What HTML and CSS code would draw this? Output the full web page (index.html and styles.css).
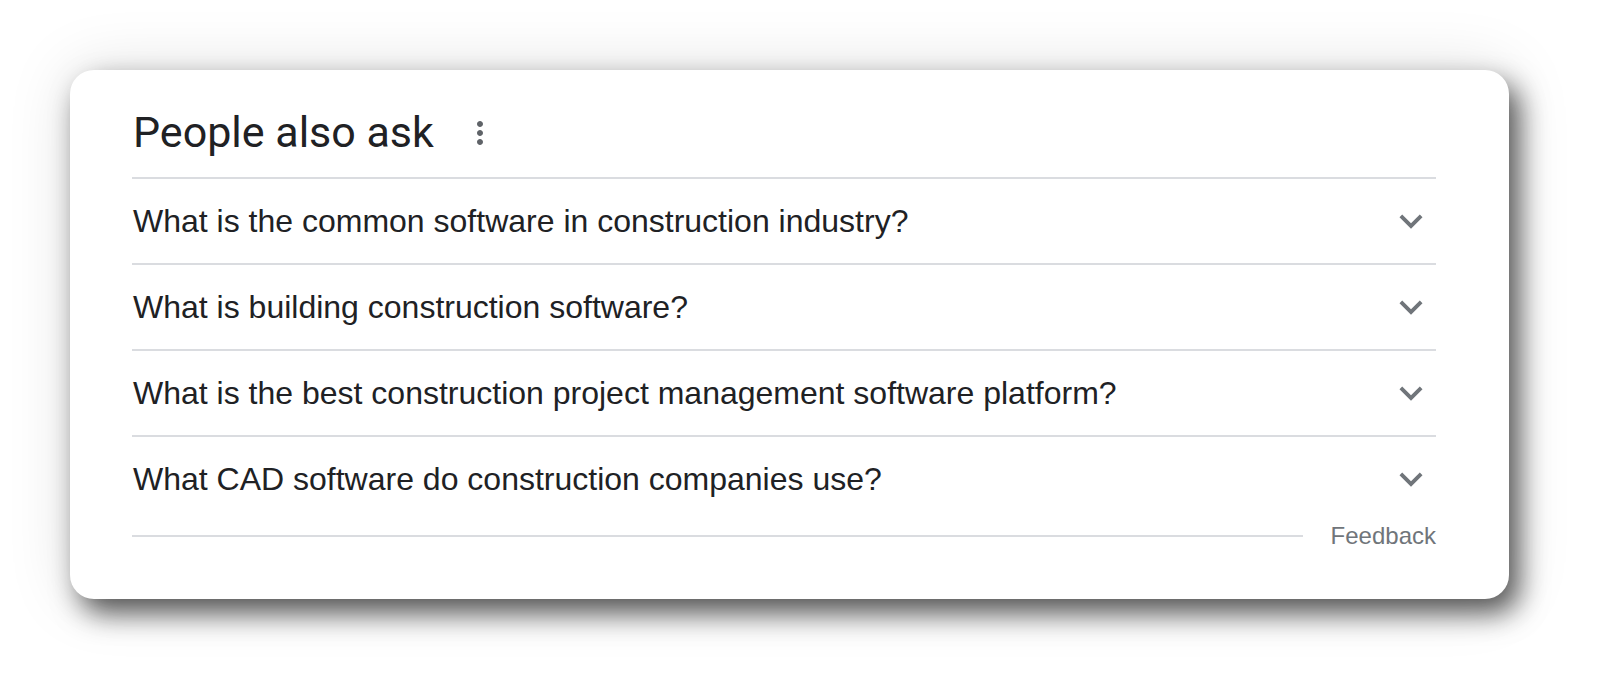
FILE: index.html
```html
<!DOCTYPE html>
<html lang="en">
<head>
<meta charset="utf-8">
<title>People also ask</title>
<link rel="stylesheet" href="styles.css">
</head>
<body>
<div class="card">
  <div class="head">
    <h2 class="title">People also ask</h2>
    <svg class="kebab" viewBox="0 0 24 24" aria-hidden="true"><path d="M12 8c1.1 0 2-.9 2-2s-.9-2-2-2-2 .9-2 2 .9 2 2 2zm0 2c-1.1 0-2 .9-2 2s.9 2 2 2 2-.9 2-2-.9-2-2-2zm0 6c-1.1 0-2 .9-2 2s.9 2 2 2 2-.9 2-2-.9-2-2-2z"/></svg>
  </div>
  <div class="list">
    <div class="row">
      <span class="q">What is the common software in construction industry?</span>
      <svg class="chev" viewBox="0 0 24 24" aria-hidden="true"><path d="M16.59 8.59L12 13.17 7.41 8.59 6 10l6 6 6-6z"/></svg>
    </div>
    <div class="row">
      <span class="q">What is building construction software?</span>
      <svg class="chev" viewBox="0 0 24 24" aria-hidden="true"><path d="M16.59 8.59L12 13.17 7.41 8.59 6 10l6 6 6-6z"/></svg>
    </div>
    <div class="row">
      <span class="q">What is the best construction project management software platform?</span>
      <svg class="chev" viewBox="0 0 24 24" aria-hidden="true"><path d="M16.59 8.59L12 13.17 7.41 8.59 6 10l6 6 6-6z"/></svg>
    </div>
    <div class="row">
      <span class="q">What CAD software do construction companies use?</span>
      <svg class="chev" viewBox="0 0 24 24" aria-hidden="true"><path d="M16.59 8.59L12 13.17 7.41 8.59 6 10l6 6 6-6z"/></svg>
    </div>
  </div>
  <div class="foot">
    <div class="line"></div>
    <span class="fb">Feedback</span>
  </div>
</div>
</body>
</html>
```
FILE: styles.css
```css
html, body {
  margin: 0;
  padding: 0;
  background: #ffffff;
}

body {
  width: 1598px;
  height: 688px;
  overflow: hidden;
  font-family: "Liberation Sans", Arial, sans-serif;
}

.card {
  box-sizing: border-box;
  margin: 70px 0 0 70px;
  width: 1439px;
  height: 529px;
  padding: 0 73px 0 62px;
  background: #ffffff;
  border-radius: 24px;
  box-shadow: 10px 14px 28px rgba(0, 0, 0, 0.65), 0 0 64px rgba(0, 0, 0, 0.13);
}

.head {
  box-sizing: border-box;
  height: 107px;
  padding-top: 37px;
  display: flex;
  align-items: flex-start;
}

.title {
  margin: 0 0 0 1px;
  font-family: Roboto, "Open Sans", sans-serif;
  font-weight: 400;
  font-size: 43px;
  line-height: 50px;
  color: #202124;
}

.kebab {
  width: 36px;
  height: 36px;
  margin: 8px 0 0 28px;
  fill: #5f6368;
}

.row {
  box-sizing: border-box;
  height: 86px;
  border-top: 2px solid #dadce0;
  display: flex;
  align-items: center;
  justify-content: space-between;
}

.q {
  padding-left: 1px;
  font-size: 32px;
  line-height: 37px;
  color: #202124;
}

.chev {
  width: 46px;
  height: 46px;
  margin-right: 2px;
  fill: #70757a;
}

.foot {
  height: 30px;
  display: flex;
  align-items: center;
}

.line {
  flex: 1;
  height: 2px;
  background: #dadce0;
}

.fb {
  margin-left: 28px;
  font-size: 24px;
  line-height: 26px;
  color: #70757a;
}
```
